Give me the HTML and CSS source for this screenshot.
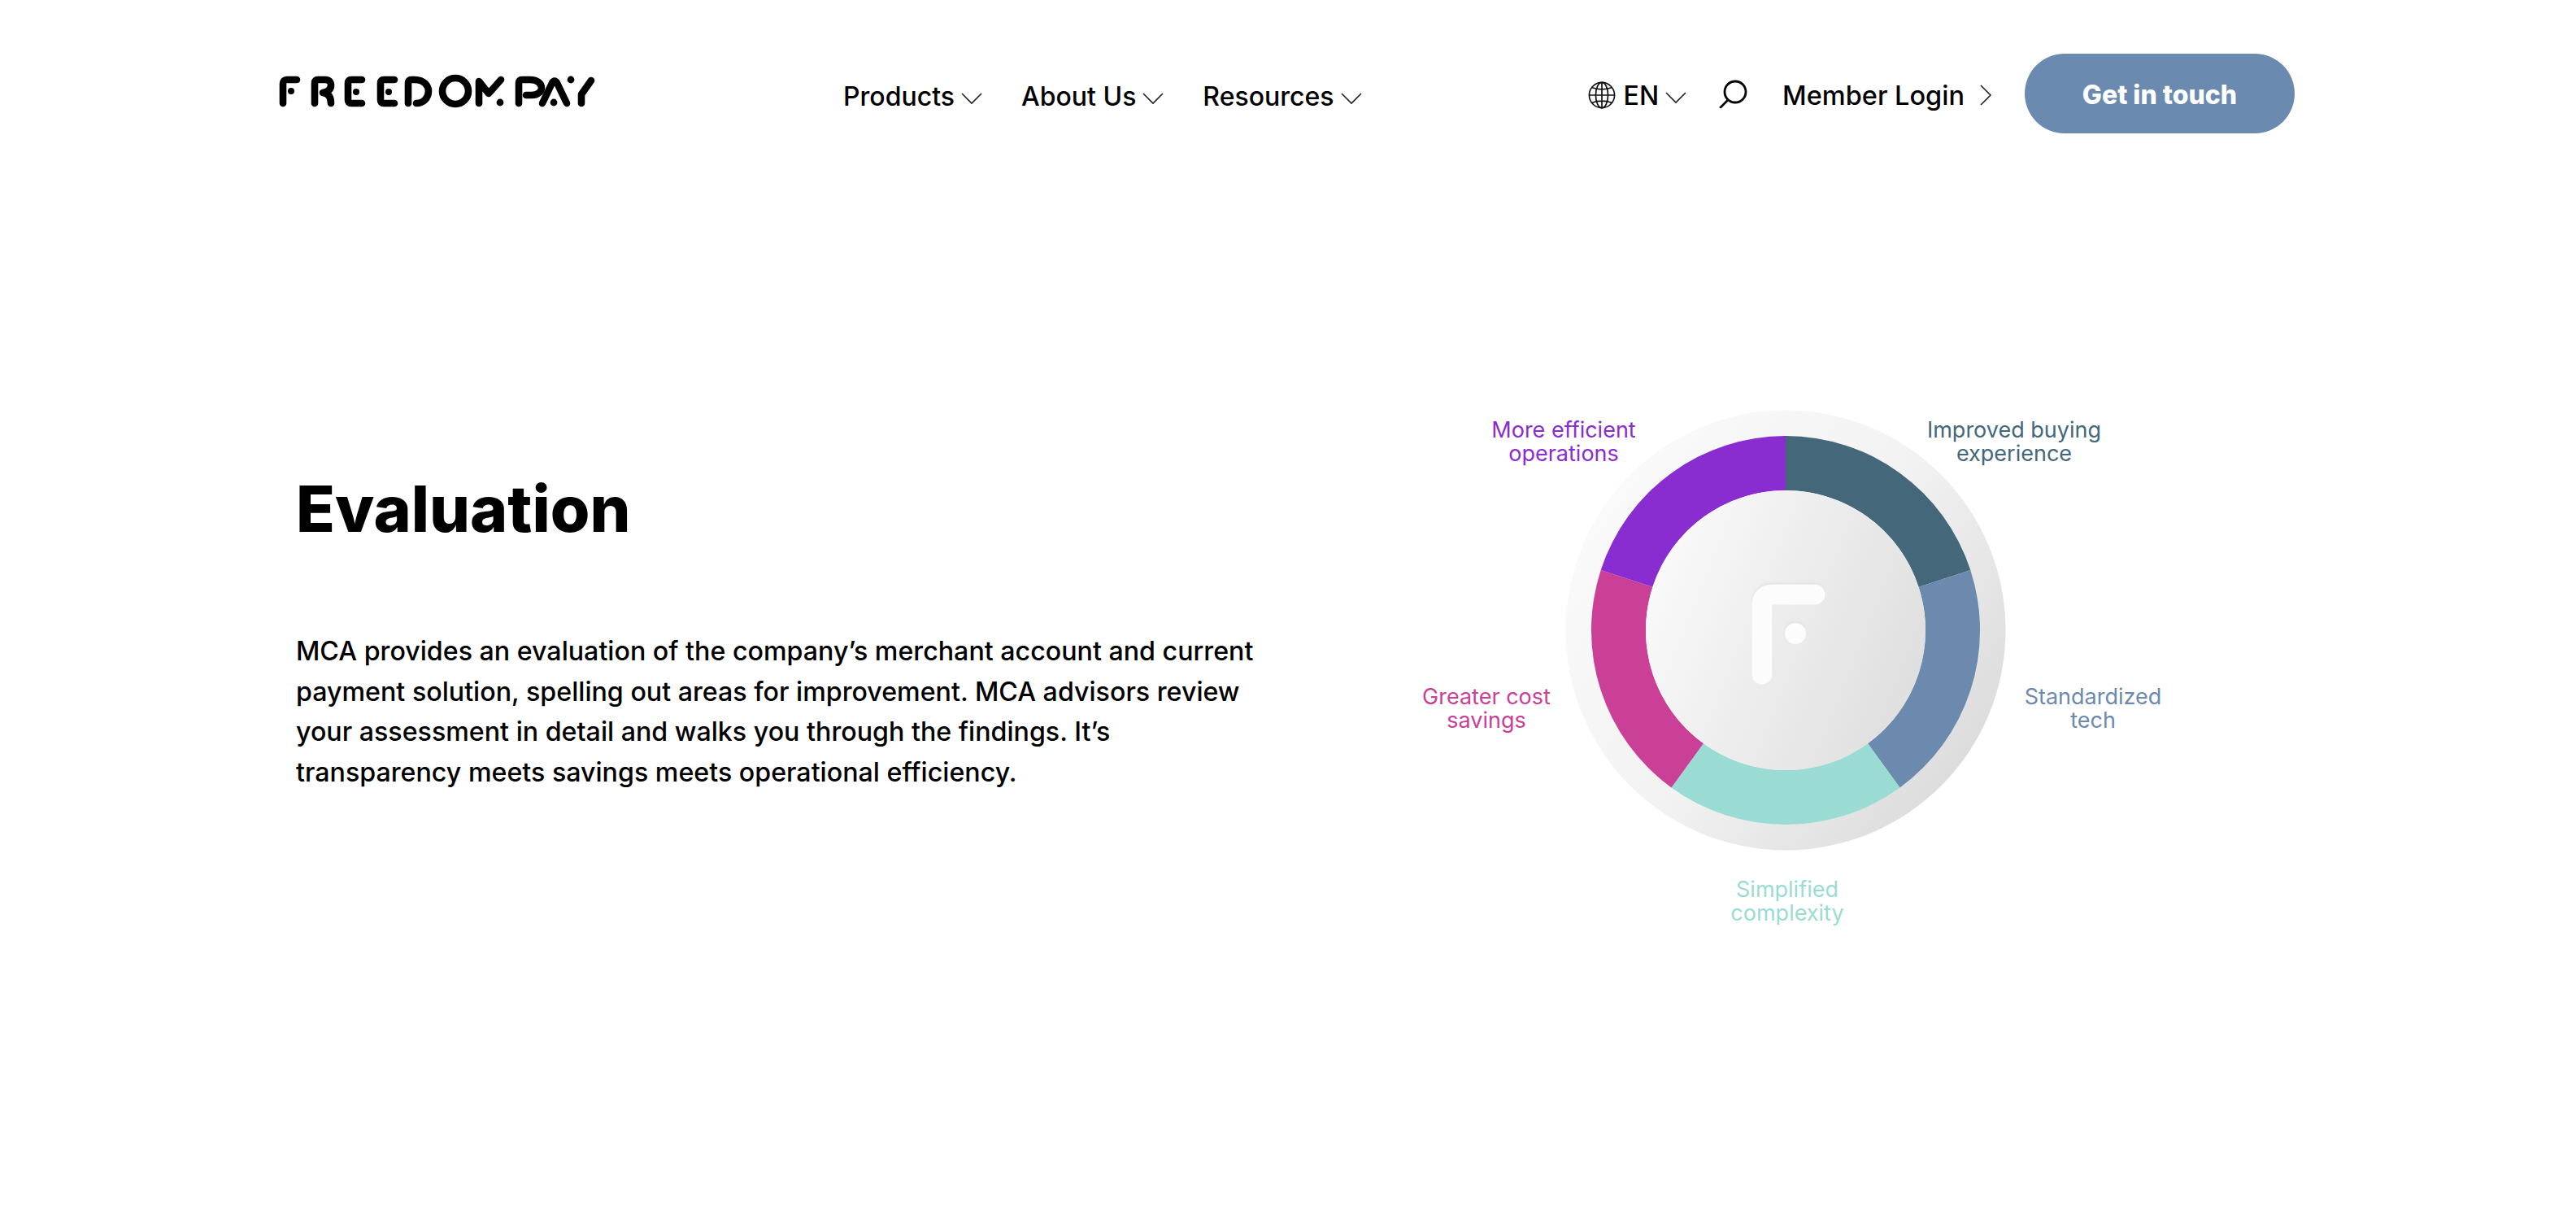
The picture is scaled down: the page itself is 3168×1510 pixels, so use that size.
FILE: index.html
```html
<!DOCTYPE html>
<html lang="en">
<head>
  <meta charset="UTF-8">
  <meta name="viewport" content="width=device-width, initial-scale=1">
  <title>Evaluation</title>
  <link rel="stylesheet" href="styles.css">
</head>
<body>
  <div class="header">
    <a class="logo" href="#" aria-label="FreedomPay">
      <svg width="395" height="50" viewBox="0 0 395 50" fill="none" stroke="#000" stroke-width="8.6" stroke-linecap="round" stroke-linejoin="round">
        <path d="M8 37V13Q8 8 13 8H25"/>
        <path d="M47 37V12Q47 8 51 8H60Q67 8 67 15Q67 22 57 24M57 24Q67 25 67 37"/>
        <path d="M105 8H92Q88 8 88 12V33Q88 37 92 37H105"/>
        <path d="M145 8H132Q128 8 128 12V33Q128 37 132 37H145"/>
        <path d="M162 37V12Q162 8 166 8H170C182 8 187 16 187 22C187 30 181 37 172 37"/>
        <circle cx="220" cy="22" r="16"/>
        <path d="M249 37V10L261 25L276 8"/>
        <path d="M298 37V12Q298 8 302 8H312C321 8 326 13 326 18C326 23 321 27 314 27H307"/>
        <path d="M327 37L339 12Q342 7 345 12L357 37"/>
        <path d="M375 37V26L387 9"/>
        <g fill="#000" stroke="none">
          <circle cx="18" cy="22" r="4"/>
          <circle cx="98" cy="23" r="4"/>
          <circle cx="138" cy="23" r="4"/>
          <circle cx="275" cy="36" r="4.4"/>
          <circle cx="341" cy="36" r="4.4"/>
          <circle cx="362" cy="8" r="4.4"/>
        </g>
      </svg>
    </a>
    <nav class="nav-main">
      <a class="nav-link" href="#">Products <svg class="chev" viewBox="0 0 26 16"><path d="M1 2L13 14L25 2"/></svg></a>
      <a class="nav-link" href="#">About Us <svg class="chev" viewBox="0 0 26 16"><path d="M1 2L13 14L25 2"/></svg></a>
      <a class="nav-link" href="#">Resources <svg class="chev" viewBox="0 0 26 16"><path d="M1 2L13 14L25 2"/></svg></a>
    </nav>
    <div class="nav-right">
      <a class="nav-link lang" href="#">
        <svg class="globe" viewBox="0 0 36 36" fill="none" stroke="#111" stroke-width="1.8"><circle cx="18" cy="18" r="16.5"/><ellipse cx="18" cy="18" rx="8" ry="16.5"/><path d="M18 1.5V34.5M1.5 18H34.5M4.5 8Q18 13 31.5 8M4.5 28Q18 23 31.5 28"/></svg>
        EN <svg class="chev" viewBox="0 0 26 16"><path d="M1 2L13 14L25 2"/></svg>
      </a>
      <a class="search" href="#" aria-label="Search">
        <svg viewBox="0 0 36 36" fill="none" stroke="#000" stroke-width="2.8" stroke-linecap="round"><circle cx="20" cy="16" r="13"/><path d="M11 26L2 35"/></svg>
      </a>
      <a class="nav-link login" href="#">Member Login <svg class="chev-right" viewBox="0 0 16 26"><path d="M2 1L14 13L2 25"/></svg></a>
      <a class="cta" href="#">Get in touch</a>
    </div>
  </div>

  <div class="main">
    <div class="copy">
      <h1>Evaluation</h1>
      <p>MCA provides an evaluation of the company’s merchant account and current<br>payment solution, spelling out areas for improvement. MCA advisors review<br>your assessment in detail and walks you through the findings. It’s<br>transparency meets savings meets operational efficiency.</p>
    </div>
    <div class="wheel">
      <svg class="wheel-art" width="700" height="700" viewBox="-350 -350 700 700">
        <defs>
          <linearGradient id="discFill" x1="0.05" y1="0.1" x2="0.95" y2="0.75">
            <stop offset="0" stop-color="#fbfbfb"/>
            <stop offset="0.55" stop-color="#f2f2f3"/>
            <stop offset="1" stop-color="#dcdcdc"/>
          </linearGradient>
          <linearGradient id="hubFill" x1="0" y1="0.2" x2="1" y2="0.6">
            <stop offset="0" stop-color="#fbfbfb"/>
            <stop offset="1" stop-color="#dfdfdf"/>
          </linearGradient>
          <filter id="soft" x="-20%" y="-20%" width="140%" height="140%">
            <feGaussianBlur stdDeviation="1.5"/>
          </filter>
        </defs>
        <circle r="270.5" fill="url(#discFill)"/>
        <path fill="#446779" d="M0 -239A239 239 0 0 1 227.3 -73.9L163.6 -53.2A172 172 0 0 0 0 -172Z"/>
        <path fill="#6b8aae" d="M227.3 -73.9A239 239 0 0 1 140.5 193.4L101.1 139.2A172 172 0 0 0 163.6 -53.2Z"/>
        <path fill="#9adcd3" d="M140.5 193.4A239 239 0 0 1 -140.5 193.4L-101.1 139.2A172 172 0 0 0 101.1 139.2Z"/>
        <path fill="#c94096" d="M-140.5 193.4A239 239 0 0 1 -227.3 -73.9L-163.6 -53.2A172 172 0 0 0 -101.1 139.2Z"/>
        <path fill="#892cd0" d="M-227.3 -73.9A239 239 0 0 1 0 -239V-172A172 172 0 0 0 -163.6 -53.2Z"/>
        <circle r="172" fill="url(#hubFill)"/>
        <g filter="url(#soft)" transform="translate(0 -2)">
          <path d="M-29 54V-31Q-29 -44 -16 -44H36" fill="none" stroke="#e2e2e2" stroke-width="25" stroke-linecap="round"/>
          <circle cx="12" cy="4" r="13" fill="#e2e2e2"/>
        </g>
        <path d="M-29 54V-31Q-29 -44 -16 -44H36" fill="none" stroke="#fcfcfc" stroke-width="25" stroke-linecap="round"/>
        <circle cx="12" cy="4" r="13" fill="#fcfcfc"/>
      </svg>
      <div class="wheel-label label-buying">Improved buying<br>experience</div>
      <div class="wheel-label label-tech">Standardized<br>tech</div>
      <div class="wheel-label label-complex">Simplified<br>complexity</div>
      <div class="wheel-label label-savings">Greater cost<br>savings</div>
      <div class="wheel-label label-ops">More efficient<br>operations</div>
    </div>
  </div>
</body>
</html>
```

FILE: styles.css
```css
* {
  box-sizing: border-box;
}
body {
  margin: 0;
  height: 1510px;
  background: #fff;
  color: #000;
  font-family: Inter, "Open Sans", sans-serif;
  overflow: hidden;
}
a {
  color: inherit;
  text-decoration: none;
}
.header {
  display: flex;
  align-items: center;
  height: 98px;
  margin: 66px 346px 0 340px;
}
.logo {
  display: flex;
}
.logo svg {
  display: block;
}
.nav-main {
  display: flex;
  gap: 48px;
  margin-left: 302px;
  padding-top: 2px;
}
.nav-right {
  display: flex;
  align-items: center;
  margin-left: auto;
}
.nav-link {
  display: flex;
  align-items: center;
  gap: 8px;
  padding-top: 4px;
  font-size: 32px;
  font-weight: 500;
  white-space: nowrap;
}
.chev {
  width: 26px;
  height: 16px;
  margin-top: 6px;
  fill: none;
  stroke: #222;
  stroke-width: 1.6;
}
.chev-right {
  width: 16px;
  height: 26px;
  margin-left: 10px;
  fill: none;
  stroke: #222;
  stroke-width: 1.6;
}
.globe {
  width: 34px;
  height: 34px;
  margin-right: 2px;
}
.search {
  display: flex;
  margin-left: 40px;
}
.search svg {
  width: 36px;
  height: 36px;
}
.login {
  margin-left: 42px;
  font-size: 32.5px;
}
.cta {
  display: flex;
  align-items: center;
  justify-content: center;
  width: 332px;
  height: 98px;
  margin-left: 40px;
  padding-top: 2px;
  border-radius: 49px;
  background: #6a8ab0;
  color: #fff;
  font-size: 32px;
  font-weight: 800;
}
.main {
  display: flex;
  margin: 0 0 0 364px;
}
.copy {
  width: 1260px;
  padding-top: 414px;
}
h1 {
  margin: 0 0 102px;
  font-size: 78.7px;
  line-height: 96px;
  font-weight: 800;
}
.copy p {
  margin: 0;
  font-size: 32.2px;
  font-weight: 500;
  line-height: 49.6px;
}
.wheel {
  position: relative;
  width: 700px;
  height: 700px;
  margin: 261px 0 0 222px;
}
.wheel-art {
  display: block;
}
.wheel-label {
  position: absolute;
  width: 320px;
  font-size: 27px;
  line-height: 29px;
  text-align: center;
}
.label-buying { left: 471px; top: 89px; color: #446779; }
.label-tech { left: 568px; top: 417px; color: #6b8aae; }
.label-complex { left: 192px; top: 654px; color: #9adcd3; }
.label-savings { left: -178px; top: 417px; color: #c94096; }
.label-ops { left: -83px; top: 89px; color: #892cd0; }
```
